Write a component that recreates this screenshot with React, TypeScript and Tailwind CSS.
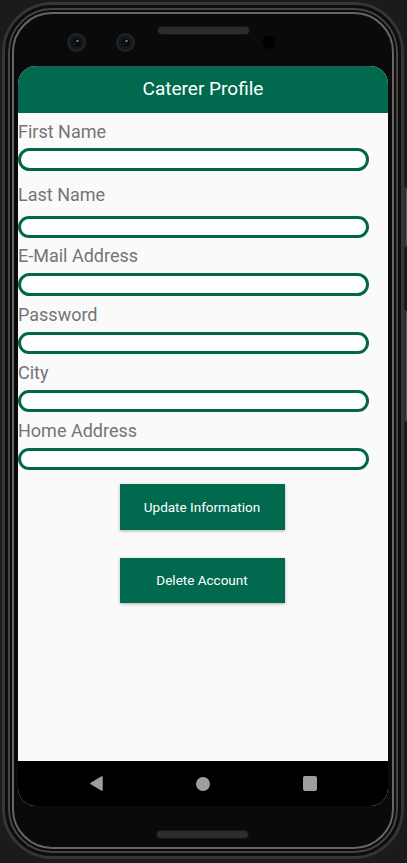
const fields = [
    { label: "First Name", labelTop: "mt-[7px]", gap: "mb-[4px]", h: "h-[23px]" },
    { label: "Last Name", labelTop: "mt-[12px]", gap: "mb-[9px]", h: "h-[22px]" },
    { label: "E-Mail Address", labelTop: "mt-[6px]", gap: "mb-[5px]", h: "h-[23px]" },
    { label: "Password", labelTop: "mt-[7px]", gap: "mb-[5px]", h: "h-[22px]" },
    { label: "City", labelTop: "mt-[7px]", gap: "mb-[5px]", h: "h-[22px]" },
    { label: "Home Address", labelTop: "mt-[7px]", gap: "mb-[5px]", h: "h-[22px]" }
];

function Camera() {
    return (
        <svg width="19" height="19" viewBox="0 0 19 19">
            <circle cx="9.5" cy="9.5" r="9.5" fill="#1d2329" />
            <circle cx="9.5" cy="9.5" r="7" fill="#12171b" />
            <circle cx="9.5" cy="9.5" r="4" fill="#080a0c" />
            <circle cx="10.5" cy="8" r="1.3" fill="#6b7178" />
            <circle cx="7.8" cy="11" r="0.8" fill="#40464c" />
        </svg>
    );
}

function Grille() {
    return (
        <div className="h-[9px] w-[93px] rounded-full bg-[#222222] border border-[#151515] bg-[radial-gradient(#3a3a3a_0.6px,transparent_0.8px)] bg-[length:2px_2px]" />
    );
}

function App() {
    return (
        <div
            className="relative w-[407px] h-[863px] bg-[#1b1b1b] overflow-hidden pt-[2px] pl-[2px]"
            style={{ fontFamily: "Roboto, 'Noto Sans', sans-serif" }}
        >
            {/* side buttons */}
            <div className="absolute right-0 top-[187px] w-[3px] h-[60px] rounded-r bg-[#2e2e2e] border-r border-[#555]" />
            <div className="absolute right-0 top-[310px] w-[3px] h-[112px] rounded-r bg-[#2e2e2e] border-r border-[#555]" />

            <div className="w-[402px] h-[857px] rounded-[50px] border-[3px] border-[#353535] bg-[#0d0d0d] p-[3px]">
                <div className="h-full rounded-[44px] border-2 border-[#454545] bg-[#0b0b0b] p-[2px]">
                    <div className="h-full rounded-[40px] border-2 border-[#666666] bg-[#0a0a0a] flex flex-col px-[4px]">

                        {/* top bezel */}
                        <div className="h-[52px] flex items-start pl-[49px] shrink-0">
                            <div className="mt-[19px]"><Camera /></div>
                            <div className="mt-[19px] ml-[30px]"><Camera /></div>
                            <div className="mt-[12px] ml-[22px]"><Grille /></div>
                            <div className="mt-[22px] ml-[12px] w-[13px] h-[13px] rounded-full bg-black" />
                        </div>

                        {/* screen */}
                        <div className="h-[740px] rounded-[18px] overflow-hidden flex flex-col bg-[#fafafa] shrink-0">
                            <div className="h-[47px] bg-[#00694e] flex items-center justify-center text-white text-[19px] shrink-0">
                                Caterer Profile
                            </div>

                            <div className="flex-1 flex flex-col">
                                {fields.map(f => (
                                    <div key={f.label} className="flex flex-col">
                                        <span className={`${f.labelTop} ${f.gap} text-[18px] leading-[24px] text-[#757575]`}>
                                            {f.label}
                                        </span>
                                        <input
                                            className={`${f.h} w-[351px] rounded-full border-[3px] border-[#00664c] bg-white outline-none`}
                                        />
                                    </div>
                                ))}

                                <div className="flex flex-col items-center mt-[14px] gap-[28px] pr-[2px]">
                                    <button className="w-[165px] h-[46px] bg-[#00694e] text-white text-[13.5px] font-normal shadow-[0_1px_3px_rgba(0,0,0,0.3)]">
                                        Update Information
                                    </button>
                                    <button className="w-[165px] h-[45px] bg-[#00694e] text-white text-[13.5px] font-normal shadow-[0_1px_3px_rgba(0,0,0,0.3)]">
                                        Delete Account
                                    </button>
                                </div>
                            </div>

                            {/* nav bar */}
                            <div className="h-[45px] bg-black flex items-center justify-center gap-[93px] shrink-0">
                                <svg width="13" height="15" viewBox="0 0 13 15">
                                    <path d="M12 1 L1 7.5 L12 14 Z" fill="#9e9e9e" stroke="#9e9e9e" strokeWidth="1.5" strokeLinejoin="round" />
                                </svg>
                                <div className="w-[14px] h-[14px] rounded-full bg-[#9e9e9e]" />
                                <div className="w-[14px] h-[15px] rounded-[2px] bg-[#9e9e9e]" />
                            </div>
                        </div>

                        {/* bottom bezel */}
                        <div className="flex-1 flex justify-center pt-[24px]">
                            <div className="ml-[-1px]"><Grille /></div>
                        </div>
                    </div>
                </div>
            </div>
        </div>
    );
}

export default App;
